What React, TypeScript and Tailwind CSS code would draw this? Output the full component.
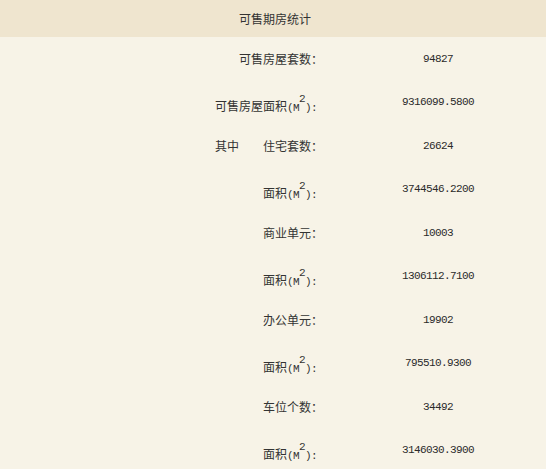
import React from 'react';

type Row = {
  label: string;
  value: string;
  indent: number;
  area?: boolean;
  prefix?: string;
};

// 可售期房统计数据
const rows: Row[] = [
  { label: '可售房屋套数：', value: '94827', indent: 239 },
  { label: '可售房屋面积', value: '9316099.5800', indent: 215, area: true },
  { label: '住宅套数：', value: '26624', indent: 263, prefix: '其中' },
  { label: '面积', value: '3744546.2200', indent: 263, area: true },
  { label: '商业单元：', value: '10003', indent: 263 },
  { label: '面积', value: '1306112.7100', indent: 263, area: true },
  { label: '办公单元：', value: '19902', indent: 263 },
  { label: '面积', value: '795510.9300', indent: 263, area: true },
  { label: '车位个数：', value: '34492', indent: 263 },
  { label: '面积', value: '3146030.3900', indent: 263, area: true },
];

const cjk = { fontFamily: '"Noto Sans CJK SC", "Noto Sans", sans-serif' };
const mono = { fontFamily: '"Liberation Mono", "DejaVu Sans Mono", monospace' };

const AreaLabel: React.FC<{ text: string }> = ({ text }) => (
  <span className="whitespace-nowrap">
    {text}
    <span className="text-[11px] tracking-[-0.6px]" style={mono}>
      (M
      <sup className="top-[-9px] text-[11px]">2</sup>
      ):
    </span>
  </span>
);

export default function App() {
  return (
    <div className="h-[469px] w-[546px] overflow-hidden bg-[#f7f3e7] text-[12px] text-[#333]" style={cjk}>
      <div className="flex h-[37px] items-center justify-center bg-[#efe5cf] pl-[4px]">
        可售期房统计
      </div>
      {rows.map((row, i) => (
        <div key={i} className="relative flex h-[43.5px] items-center">
          {row.prefix ? (
            <span className="absolute left-[215px]">{row.prefix}</span>
          ) : null}
          <div className={`w-[330px] shrink-0 ${row.area ? 'pt-[8px]' : ''}`} style={{ paddingLeft: row.indent }}>
            {row.area ? <AreaLabel text={row.label} /> : <span className="whitespace-nowrap">{row.label}</span>}
          </div>
          <div className="flex-1 text-center text-[11px] tracking-[-0.6px] text-[#2a2a2a]" style={mono}>
            {row.value}
          </div>
        </div>
      ))}
    </div>
  );
}
